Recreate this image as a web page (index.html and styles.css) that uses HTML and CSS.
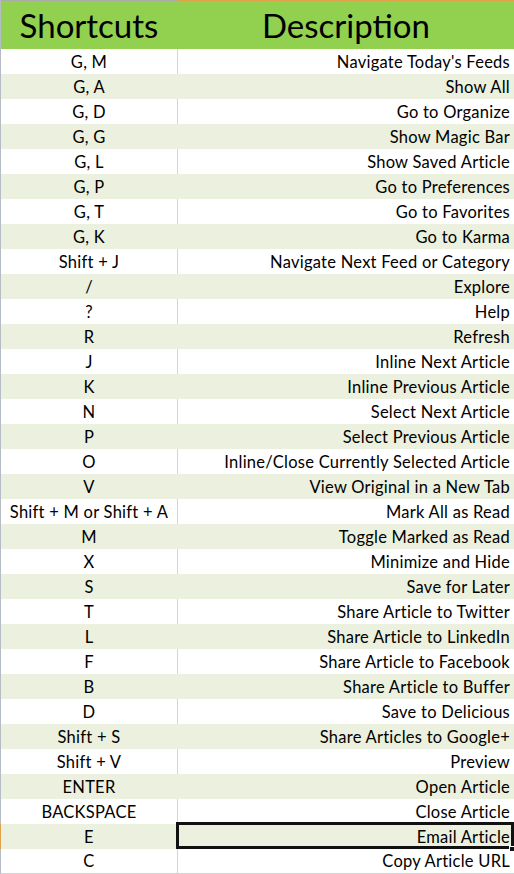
FILE: index.html
```html
<!DOCTYPE html>
<html lang="en">
<head>
    <meta charset="UTF-8">
    <meta name="viewport" content="width=device-width, initial-scale=1.0">
    <title>Keyboard Shortcuts</title>
    <link rel="stylesheet" href="styles.css">
</head>
<body>
    <table class="sheet">
        <thead>
            <tr>
                <th class="key">Shortcuts</th>
                <th class="desc">Description</th>
            </tr>
        </thead>
        <tbody>
            <tr><td class="key">G, M</td><td class="desc">Navigate Today's Feeds</td></tr>
            <tr><td class="key">G, A</td><td class="desc">Show All</td></tr>
            <tr><td class="key">G, D</td><td class="desc">Go to Organize</td></tr>
            <tr><td class="key">G, G</td><td class="desc">Show Magic Bar</td></tr>
            <tr><td class="key">G, L</td><td class="desc">Show Saved Article</td></tr>
            <tr><td class="key">G, P</td><td class="desc">Go to Preferences</td></tr>
            <tr><td class="key">G, T</td><td class="desc">Go to Favorites</td></tr>
            <tr><td class="key">G, K</td><td class="desc">Go to Karma</td></tr>
            <tr><td class="key">Shift + J</td><td class="desc">Navigate Next Feed or Category</td></tr>
            <tr><td class="key">/</td><td class="desc">Explore</td></tr>
            <tr><td class="key">?</td><td class="desc">Help</td></tr>
            <tr><td class="key">R</td><td class="desc">Refresh</td></tr>
            <tr><td class="key">J</td><td class="desc">Inline Next Article</td></tr>
            <tr><td class="key">K</td><td class="desc">Inline Previous Article</td></tr>
            <tr><td class="key">N</td><td class="desc">Select Next Article</td></tr>
            <tr><td class="key">P</td><td class="desc">Select Previous Article</td></tr>
            <tr><td class="key">O</td><td class="desc">Inline/Close Currently Selected Article</td></tr>
            <tr><td class="key">V</td><td class="desc">View Original in a New Tab</td></tr>
            <tr><td class="key">Shift + M or Shift + A</td><td class="desc">Mark All as Read</td></tr>
            <tr><td class="key">M</td><td class="desc">Toggle Marked as Read</td></tr>
            <tr><td class="key">X</td><td class="desc">Minimize and Hide</td></tr>
            <tr><td class="key">S</td><td class="desc">Save for Later</td></tr>
            <tr><td class="key">T</td><td class="desc">Share Article to Twitter</td></tr>
            <tr><td class="key">L</td><td class="desc">Share Article to LinkedIn</td></tr>
            <tr><td class="key">F</td><td class="desc">Share Article to Facebook</td></tr>
            <tr><td class="key">B</td><td class="desc">Share Article to Buffer</td></tr>
            <tr><td class="key">D</td><td class="desc">Save to Delicious</td></tr>
            <tr><td class="key">Shift + S</td><td class="desc">Share Articles to Google+</td></tr>
            <tr><td class="key">Shift + V</td><td class="desc">Preview</td></tr>
            <tr><td class="key">ENTER</td><td class="desc">Open Article</td></tr>
            <tr><td class="key">BACKSPACE</td><td class="desc">Close Article</td></tr>
            <tr class="active"><td class="key">E</td><td class="desc selected">Email Article</td></tr>
            <tr class="last"><td class="key">C</td><td class="desc">Copy Article URL</td></tr>
        </tbody>
    </table>
</body>
</html>
```

FILE: styles.css
```css
body {
    margin: 0;
    padding: 0;
    background: white;
    font-family: Lato, "Open Sans", sans-serif;
    color: #000;
    overflow: hidden;
}
.sheet {
    width: 514px;
    border-collapse: separate;
    border-spacing: 0;
    table-layout: fixed;
}
.sheet th,
.sheet td {
    padding: 0;
    box-sizing: border-box;
    vertical-align: middle;
    white-space: nowrap;
}
.sheet .key {
    width: 178px;
    text-align: center;
    border-left: 1px solid #b6bcc4;
    border-right: 1px solid #d4d4d4;
}
th {
    height: 49px;
    background-color: #92d050;
    font-size: 33px;
    font-weight: normal;
    text-align: center;
    border-top: 1px solid #ababab;
}
.sheet th.key {
    border-right-color: #92d050;
}
.sheet th.desc {
    text-align: center;
    border-top-color: #e1a04a;
}
td {
    height: 25px;
    font-size: 16.5px;
    letter-spacing: 0.25px;
}
.sheet td.desc {
    text-align: right;
    padding-right: 4px;
}
tbody tr:nth-child(even) td {
    background-color: #ebf1de;
}
.sheet tbody tr:nth-child(even) td.key {
    border-right-color: #ebf1de;
}
.sheet tr.active td.key {
    border-left-color: #e1a04a;
}
tr.last td {
    border-bottom: 1px solid #d4d4d4;
}
.selected {
    position: relative;
}
.selected::after {
    content: "";
    position: absolute;
    left: -2px;
    top: -2px;
    right: 0;
    bottom: 0;
    border: 3px solid #111;
}
.selected::before {
    content: "";
    position: absolute;
    right: 0;
    bottom: -3px;
    width: 4px;
    height: 4px;
    background: #111;
    border: 1px solid white;
    border-right: 0;
    z-index: 1;
}
```
